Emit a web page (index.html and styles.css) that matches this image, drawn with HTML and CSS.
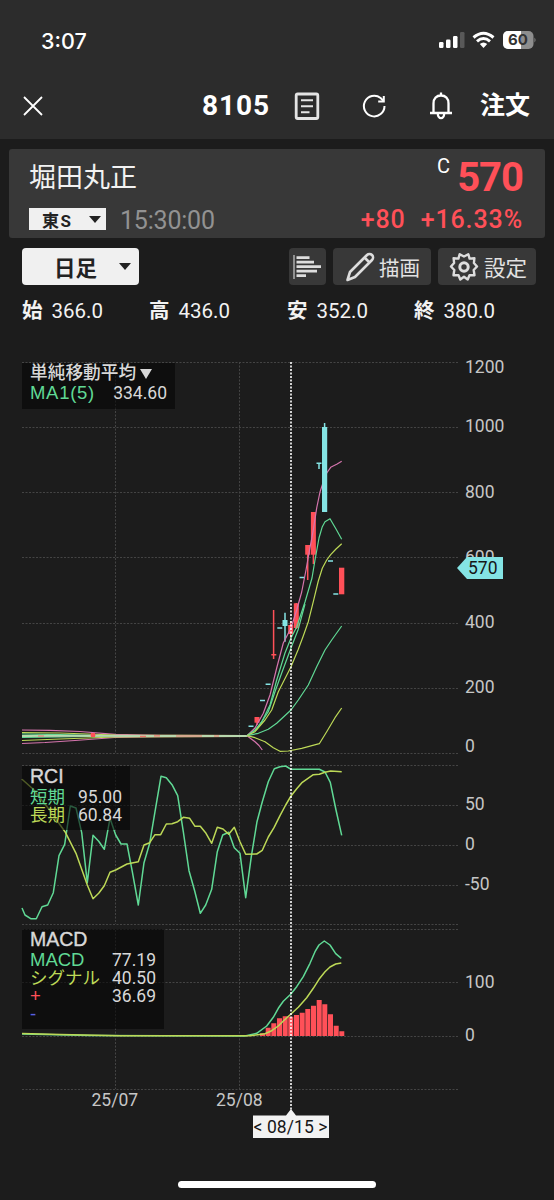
FILE: index.html
```html
<!DOCTYPE html>
<html lang="ja">
<head>
  <meta charset="UTF-8">
  <meta name="viewport" content="width=device-width, initial-scale=1.0">
  <title>8105 堀田丸正</title>
  <link rel="stylesheet" href="styles.css">
</head>
<body>
  <header class="top">
    <div class="status-bar">
      <span class="clock">3:07</span>
      <svg class="status-icons" width="100" height="20" viewBox="0 0 100 20">
        <g fill="#fff">
          <rect x="2" y="11" width="4.5" height="6" rx="1.2"/>
          <rect x="9" y="8.500" width="4.500" height="8.500" rx="1.2"/>
          <rect x="16" y="5" width="4.500" height="12" rx="1.2"/>
          <rect x="23" y="1" width="4.500" height="16" rx="1.2" fill="#595959"/>
        </g>
        <g fill="none" stroke="#fff" stroke-width="3">
          <path d="M36.500 6.500Q46.500-2 56.500 6.500"/>
          <path d="M40 10.300Q46.500 4.700 53 10.300"/>
        </g>
        <path d="M42.800 13Q46.500 9.800 50.200 13L46.500 17Z" fill="#fff"/>
        <rect x="66" y="0" width="30.500" height="18" rx="5" fill="#8e8e8e"/>
        <path d="M71 0H84V18H71A5 5 0 0 1 66 13V5A5 5 0 0 1 71 0Z" fill="#fff"/>
        <path d="M97.500 6.500Q99.500 9 97.500 11.500Z" fill="#8e8e8e"/>
        <text x="81" y="14.300" class="battery">60</text>
      </svg>
    </div>
    <nav class="nav">
      <svg class="close" width="22" height="22" viewBox="0 0 22 22"><path d="M2 2L20 20M20 2L2 20"/></svg>
      <h1>8105</h1>
      <svg class="note" width="26" height="28" viewBox="0 0 26 28">
        <rect x="2.200" y="2" width="21.600" height="24.500" rx="1.500" stroke-width="2.800"/>
        <path d="M7 8.300H19M7 14.300H19M7 20.300H15.500" stroke-width="1.900"/>
      </svg>
      <svg class="reload" width="26" height="26" viewBox="0 0 26 26">
        <path d="M23.500 13A10.300 10.300 0 1 1 19.600 5L22.600 8" stroke-width="2"/>
        <path d="M22.800 3V8.400H17.200" stroke-width="2"/>
      </svg>
      <svg class="bell" width="24" height="30" viewBox="0 0 24 30">
        <path d="M1 22H23M4.500 22V12.500C4.500 7.500 7.500 4.500 12 4.500S19.500 7.500 19.500 12.500V22M12 4.500V1.500" stroke-width="2.300"/>
        <path d="M8.800 22.500A3.200 4.600 0 0 0 15.200 22.500" stroke-width="2.300"/>
      </svg>
      <span class="order">注文</span>
    </nav>
  </header>

  <main>
    <section class="quote">
      <div class="stock">
        <h2>堀田丸正</h2>
        <div class="market">
          <span class="select-small">東S<i class="caret"></i></span>
          <time>15:30:00</time>
        </div>
      </div>
      <div class="price">
        <div class="last"><sup>C</sup><b>570</b></div>
        <div class="change"><span>+80</span><span>+16.33%</span></div>
      </div>
    </section>

    <section class="tools">
      <div class="select-big">日足<i class="caret"></i></div>
      <div class="btn volume">
        <svg width="30" height="26" viewBox="0 0 30 26">
          <path d="M2 1V25" stroke="#ccc" stroke-width="1.200"/>
          <path d="M4.500 3.700H17.500M4.500 8.200H22M4.500 12.700H29M4.500 17.200H25M4.500 21.700H14" stroke="#ddd" stroke-width="2.800"/>
        </svg>
      </div>
      <div class="btn draw">
        <svg width="30" height="30" viewBox="0 0 30 30" fill="none" stroke="#ddd" stroke-width="2.600" stroke-linejoin="round">
          <path d="M2.500 28L5 20L22 3A3.500 3.500 0 0 1 27 8L10 25ZM19.500 5.500L24.500 10.500"/>
        </svg>
        <span>描画</span>
      </div>
      <div class="btn config">
        <svg width="30" height="30" viewBox="0 0 30 30" fill="none" stroke="#ddd" stroke-width="2.400" stroke-linejoin="round">
          <path d="M15 4.500L19.300 2.200L20.600 6.600L25.400 6.200L24.900 11L28 14.500L24.700 18L25.500 23.200L20.500 23.200L18.700 27.500L15 24.800L11.300 27.500L9.500 23.200L4.500 23.200L5.300 18L2 14.500L5.100 11L4.600 6.200L9.400 6.600L10.700 2.200Z"/>
          <circle cx="15" cy="15" r="4.200" stroke-width="3"/>
        </svg>
        <span>設定</span>
      </div>
    </section>

    <dl class="ohlc">
      <div><dt>始</dt><dd>366.0</dd></div>
      <div><dt>高</dt><dd>436.0</dd></div>
      <div><dt>安</dt><dd>352.0</dd></div>
      <div><dt>終</dt><dd>380.0</dd></div>
    </dl>

    <section class="chart">
      <svg width="554" height="860" viewBox="0 340 554 860">
        <!-- grid -->
        <g class="grid">
          <path d="M22 362.500H458M22 427.500H458M22 492.500H458M22 557.500H458M22 623.500H458M22 688.500H458M22 753.500H458"/>
          <path d="M22 765.500H458M22 805.500H458M22 845.500H458M22 885.500H458M22 924.500H458"/>
          <path d="M22 929.500H458M22 982.500H458M22 1036.500H458M22 1089.500H458"/>
          <path d="M115.500 362V753M115.500 766V924M115.500 930V1089M239.500 362V753M239.500 766V924M239.500 930V1089"/>
        </g>

        <!-- flat part before the breakout -->
        <g class="lines">
          <path class="pink" d="M22 730L50 730.300L80 731.500L115 734.300L160 735.300L246 735.500M22 743.500L45 742.500L75 740.500L115 737.500L160 736.700L246 736.500"/>
          <path class="yellow" d="M22 732.700L60 733L115 735L246 735.500M22 740.500L60 739L115 737L246 736.500"/>
          <path class="green" d="M22 734L60 734.700L115 736H246M22 737.500L60 737L115 736"/>
          <path class="flat" d="M22 736L92 735.700L130 736H247"/>
          <path class="red" d="M38 736H44M90 735H96M140 736.300H146M154 735.800H160M176 736H202M214 736H219"/>
        </g>

        <!-- candles -->
        <g class="up">
          <path d="M257 717V725M273.600 610V659M290.700 621V638M296.300 603V629M307.700 545V580M313.400 512V564"/>
          <rect x="91" y="733" width="4" height="4"/>
          <rect x="254.500" y="717" width="5" height="5.700"/>
          <rect x="271.300" y="654" width="5" height="1.500"/>
          <rect x="288.200" y="625" width="5" height="9"/>
          <rect x="293.800" y="603.300" width="5" height="24.700"/>
          <rect x="305.200" y="545" width="5" height="9.700"/>
          <rect x="310.900" y="512" width="5" height="42.700"/>
          <rect x="339" y="567.700" width="5.300" height="26.600"/>
        </g>
        <g class="down">
          <path d="M285 612.700V641.700M319 463V469M324.600 423V512"/>
          <path d="M248.500 726.300H253.500M260 700.500H265M265.600 684.300H270.600M277.300 628H282.300M299.500 577.500H304.500M316.500 463.300H321.500M328 561H333M333.300 594H338.300"/>
          <rect x="282.500" y="620" width="5" height="6"/>
        </g>

        <g class="lines">
          <path class="pink" d="M247 735.700L255 728L263.300 713.300L270 695L276.700 668L283.300 643L291 628L296.700 610L301.700 592L306 570L309 553L313.300 530L316.700 508L320 492L323.300 482L326.700 473L330.700 467.300L336.700 464.300L341.700 461.300"/>
          <path class="pink" d="M247 735.700L255 741.700L259 745.500L262.300 750"/>
          <path class="green" d="M247 735.700L255 730L261.700 722L270 705L276.700 680L285 653L291 638L296.700 627L305 602L312 578L315 560L319 538L322.300 526.700L325 521.700L330 518.700L336 529L341.700 539.300"/>
          <path class="green" d="M247 735.700L257 729L268.300 711.700L275 691.700L281.700 673L291 648L298 630L305 604"/>
          <path class="yellow" d="M247 735.700L255 731.700L265 720L271.700 710L278.300 691.700L291 666.700L298 650L303 636.700L308.300 621.700L313.300 601.700L318.300 581L322.300 568.300L326.700 560L330.700 554.700L336 549L341.700 543.700"/>
          <path class="green" d="M247 735.700L258.300 733.300L268.300 729.300L276.700 723.300L291 710L298.300 700L308.300 685L316.700 666.700L325 650L331.700 640L336.700 633L341.700 626"/>
          <path class="yellow" d="M247 735.700L255 737.700L265 741.700L273.300 747.700L280 751.300L288.300 751L301.700 748.300L319.300 743.700L326.700 731.700L335 717.700L341.700 708"/>
        </g>
        <rect class="candle-front" x="322" y="427" width="5.200" height="85"/>

        <!-- RCI -->
        <g class="lines thick">
          <path class="green" d="M22 908L25 915L30.700 918.700H36.300L42 906.700L47.700 905L53.300 892.700L59 855.700L64.700 844.300L70.300 806L76 808L81.700 832.700L87.300 882.700L93 835.300L98.700 841.300L104.300 849.300L110 818.300L115.700 835L121 844H127L132.300 871.700L138.300 905L144 862.700L149.700 843.300L155 811.700L161 776.300L166.300 777.700L172 784.700L177.700 795.700L183.300 831.700L189 870.700L194.700 891L200.300 913.300L205.700 905L211.700 889.300L217.300 851.700L222.700 835L228.700 832.300L234.300 847.700L240 853.300L245.700 897.700L251.300 856.700L257 821.700L262.300 801.700L268.300 781.700L274.300 768.700L280 766.700L285.700 766L291 769.300H319.300L325 772L330.300 782.300L336 810L341.700 835.300"/>
          <path class="yellow" d="M22 779.300L33 789L48 808L65 831.700L76 853.300L87.300 885L93 898.700L98.700 893.300L104.300 885.700L110 872.300L115.700 870L127 864L138.300 861.700L144 845L149.700 842.700L155 834.700H160.700L166.300 824L172 823.700L177.700 821.700L183.300 817.300L189.700 818.300L195 826.300H200.300L206 833.300L211.700 843.300L217.300 827.300L223 829L228.700 834.300L234.300 827.300L240 841.700L245.700 854.300L256.700 854L262.300 850.300L268.300 837L274 827.700L280 815.700L285.700 805L291 796L296.700 788.700L302.300 782.300L313.300 774.700L319.300 774.300L325 772.300L330.700 771L341.700 771.700"/>
        </g>

        <!-- MACD histogram and lines -->
        <path class="bars" d="M260 1036V1033.300H265V1036M265.700 1036V1027.700H270.700V1036M271.300 1036V1023.300H276.300V1036M277 1036V1018.300H282V1036M282.700 1036V1016.300H287.700V1036M288.300 1036V1016.700H293.300V1036M294 1036V1015H299V1036M299.700 1036V1012.700H304.700V1036M305.300 1036V1009H310.300V1036M311 1036V1005.700H316V1036M316.700 1036V1000H321.700V1036M322.300 1036V1004.300H327.300V1036M328 1036V1014.300H333V1036M333.700 1036V1025.700H338.700V1036M339.300 1036V1031.300H344.300V1036"/>
        <g class="lines thick">
          <path class="green" d="M22 1034L90 1035.500L245 1036L256.700 1033.300L266.700 1026L273.300 1017.300L278.300 1008.300L283.300 1001.300L290.700 994.300L296.700 986.700L303.300 976.700L310 963.300L315 951.700L319 945L324.300 941L330 945L335.700 953.700L341.300 958.300"/>
          <path class="yellow" d="M22 1033.500L60 1034.500L120 1035.700H250L265 1033.700L271.700 1030.700L278.300 1026L283.300 1021L290.700 1014.300L298.300 1007.300L306.700 997.700L313.300 988.300L319 979.300L325 971.700L330 967L335.700 964L341.300 963"/>
        </g>

        <path class="cursor" d="M291 362V1112"/>

        <g class="axis">
          <text x="465" y="373">1200</text>
          <text x="465" y="432">1000</text>
          <text x="465" y="497.500">800</text>
          <text x="465" y="563">600</text>
          <text x="465" y="628">400</text>
          <text x="465" y="693">200</text>
          <text x="465" y="752">0</text>
          <text x="465" y="810">50</text>
          <text x="465" y="850">0</text>
          <text x="465" y="890">-50</text>
          <text x="465" y="988">100</text>
          <text x="465" y="1041">0</text>
          <text x="91.500" y="1106">25/07</text>
          <text x="216" y="1106">25/08</text>
        </g>
        <path d="M457 568L467 557H503V579H467Z" fill="#84e4e4"/>
        <text class="tag" x="468" y="574">570</text>
        <path d="M286 1115.500L291 1109L296 1115.500H329V1138H253V1115.500Z" fill="#f2f2f2"/>
        <text class="tag" x="253.500" y="1133" textLength="74">&lt; 08/15 &gt;</text>
      </svg>

      <div class="legend legend-ma">
        <h3>単純移動平均<span class="tri"></span></h3>
        <p><span class="g name">MA1(5)</span><span>334.60</span></p>
      </div>
      <div class="legend legend-rci">
        <h3 class="name">RCI</h3>
        <p><span class="g">短期</span><span>95.00</span></p>
        <p><span class="y">長期</span><span>60.84</span></p>
      </div>
      <div class="legend legend-macd">
        <h3 class="name">MACD</h3>
        <p><span class="g name">MACD</span><span>77.19</span></p>
        <p><span class="y">シグナル</span><span>40.50</span></p>
        <p><span class="r name">+</span><span>36.69</span></p>
        <p><span class="b name">-</span></p>
      </div>
      <div class="home-bar"></div>
    </section>
  </main>
</body>
</html>
```

FILE: styles.css
```css
* {
  box-sizing: border-box;
  margin: 0;
  padding: 0;
}
body {
  width: 554px;
  height: 1200px;
  overflow: hidden;
  background: #1c1c1c;
  color: #f2f2f2;
  font-family: Roboto, "Noto Sans CJK JP", sans-serif;
}
svg {
  display: block;
  flex: none;
}
.top {
  height: 139px;
  background: #2c2c2c;
}
.status-bar {
  display: flex;
  justify-content: space-between;
  height: 72px;
  padding: 27px 17px 0 41px;
}
.clock {
  font: 500 21.500px/28px Inter, sans-serif;
  color: #fff;
}
.status-icons {
  margin-top: 4px;
}
.battery {
  font: 700 15px Inter, sans-serif;
  fill: #333;
  text-anchor: middle;
}
.nav {
  display: flex;
  align-items: center;
  height: 68px;
  padding-left: 22px;
  color: #fff;
}
.nav svg {
  fill: none;
  stroke: #fff;
}
.close {
  stroke-width: 1.8;
}
.nav h1 {
  width: 68px;
  margin-left: 158px;
  font-size: 28px;
  line-height: 30px;
  letter-spacing: 0.9px;
}
.nav .note {
  margin-left: 24px;
  stroke: #e4e4e4;
}
.reload {
  margin-left: 41px;
}
.bell {
  margin-left: 42px;
}
.order {
  margin-left: 27px;
  font-size: 25px;
  font-weight: 700;
  line-height: 30px;
}
.quote {
  display: flex;
  justify-content: space-between;
  height: 89px;
  margin: 10px 9px 0;
  padding: 0 22px 0 20px;
  background: #383838;
  border-radius: 3px;
}
.quote h2 {
  height: 59px;
  padding-top: 11px;
  font-size: 27px;
  font-weight: 400;
  line-height: 36px;
}
.market {
  display: flex;
  gap: 14px;
}
.select-small {
  display: flex;
  align-items: center;
  width: 77px;
  height: 22px;
  padding-left: 13px;
  background: #f0f0f0;
  color: #222;
  font-size: 17px;
  font-weight: 700;
  letter-spacing: 1.5px;
}
.select-small .caret {
  margin: 0 5px 0 auto;
}
.caret {
  border: 6px solid transparent;
  border-top: 7px solid #222;
  border-bottom: 0;
}
.market time {
  margin-top: -2px;
  color: #929292;
  font-size: 25px;
  line-height: 30px;
  letter-spacing: -0.2px;
}
.price {
  color: #ff5058;
  text-align: right;
}
.last {
  display: flex;
  justify-content: flex-end;
  height: 56px;
  padding-top: 9px;
}
.last sup {
  margin: -3px 7px 0 0;
  color: #fff;
  font-size: 20px;
  line-height: 22px;
}
.last b {
  font-size: 40px;
  line-height: 40px;
  letter-spacing: -1px;
}
.change {
  display: flex;
  justify-content: flex-end;
  gap: 15px;
  font-size: 25px;
  font-weight: 500;
  line-height: 30px;
  letter-spacing: 0.9px;
}
.tools {
  display: flex;
  height: 37px;
  margin: 10px 18px 0 22px;
}
.select-big {
  display: flex;
  align-items: center;
  width: 117px;
  padding-left: 32px;
  background: #f0f0f0;
  border-radius: 4px;
  color: #222;
  font-size: 21.500px;
  font-weight: 700;
}
.select-big .caret {
  margin: 0 8px 0 auto;
}
.btn {
  display: flex;
  align-items: center;
  background: #383838;
  border-radius: 4px;
  color: #e2e2e2;
  font-size: 20.500px;
  font-weight: 400;
}
.volume {
  width: 37px;
  margin-left: 150px;
  padding-left: 3px;
}
.draw {
  width: 98px;
  margin-left: 7px;
  padding-left: 12px;
  gap: 4px;
}
.config {
  width: 98px;
  margin-left: 7px;
  padding-left: 11px;
  gap: 5px;
  font-size: 21.500px;
}
.ohlc {
  display: grid;
  grid-template-columns: 127px 138px 127px 100px;
  height: 55px;
  margin-left: 22px;
  padding-top: 11px;
}
.ohlc div {
  display: flex;
  gap: 9px;
  font-size: 20.500px;
  line-height: 30px;
}
.ohlc dt {
  font-weight: 700;
}
.chart {
  position: relative;
}
.grid {
  fill: none;
  stroke: #444;
  stroke-dasharray: 2 1.500;
}
.lines {
  fill: none;
  stroke-width: 1.200;
  stroke-linejoin: round;
}
.thick {
  stroke-width: 1.500;
}
.pink {
  stroke: #d675ae;
}
.green {
  stroke: #60d995;
}
.yellow {
  stroke: #bdd957;
}
.red {
  stroke: #f0776d;
}
.flat {
  stroke: #b8d8ae;
  stroke-width: 2;
}
.up {
  fill: #ff5058;
  stroke: none;
}
.up path {
  stroke: #ff5058;
  stroke-width: 1.500;
}
.down {
  fill: #84e4e4;
}
.down path {
  stroke: #84e4e4;
  stroke-width: 1.500;
}
.candle-front {
  fill: #84e4e4;
}
.bars {
  fill: #ff5058;
}
.cursor {
  stroke: #fff;
  stroke-width: 1.600;
  stroke-dasharray: 2 1.500;
}
.axis text {
  fill: #c6c6c6;
  font-size: 17.500px;
}
.tag {
  fill: #161616;
  font-size: 17.500px;
}
.legend {
  position: absolute;
  left: 22px;
  padding-left: 8px;
  background: rgba(5, 5, 5, 0.600);
  color: #d8d8d8;
}
.legend h3 {
  display: flex;
  align-items: center;
  height: 20px;
  font-size: 17.700px;
  font-weight: 500;
  line-height: 20px;
  white-space: nowrap;
}
.legend h3.name {
  font-size: 19.500px;
}
.legend p {
  display: flex;
  justify-content: space-between;
  height: 18px;
  font-size: 17.500px;
  line-height: 18px;
}
.name {
  font-family: "Liberation Sans", Arial, sans-serif;
}
p .name {
  font-size: 18.500px;
}
.legend-ma {
  top: 23px;
  width: 153px;
  height: 46px;
  padding-right: 8px;
}
.legend-ma p {
  margin-top: 1px;
}
.legend-ma .name {
  letter-spacing: 0.7px;
}
.tri {
  margin: 2px 0 0 4px;
  border: 6px solid transparent;
  border-top: 10px solid #d8d8d8;
  border-bottom: 0;
}
.legend-rci {
  top: 426px;
  width: 108px;
  height: 64px;
  padding-right: 8px;
}
.legend-rci h3 {
  -webkit-text-stroke: 0.4px;
}
.legend-macd h3 {
  -webkit-text-stroke: 0.4px;
}
.legend-rci p:nth-child(2),
.legend-macd p:nth-child(2) {
  margin-top: 2px;
}
.legend-macd {
  top: 589px;
  width: 142px;
  height: 100px;
  padding-right: 8px;
}
.g {
  color: #60d995;
}
.y {
  color: #bdd957;
}
.r {
  color: #ff5058;
}
.b {
  color: #5960e0;
}
.home-bar {
  position: absolute;
  top: 841px;
  left: 178px;
  width: 198px;
  height: 7px;
  border-radius: 4px;
  background: #fff;
}
```
